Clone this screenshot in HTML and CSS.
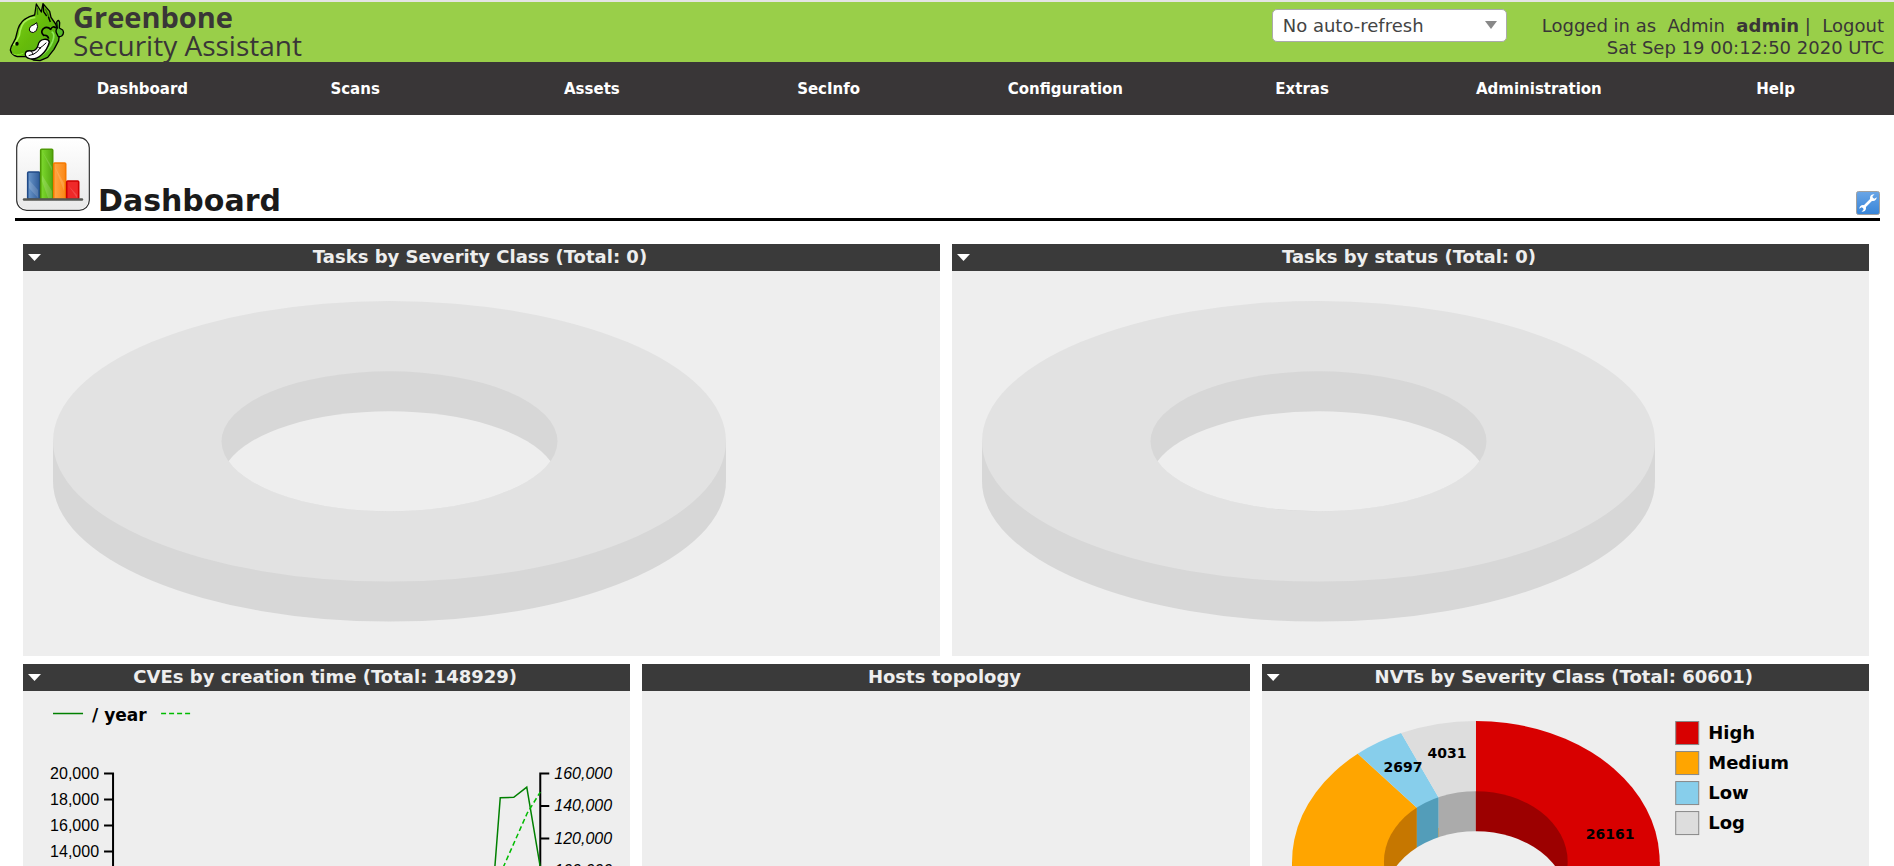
FILE: index.html
```html
<!DOCTYPE html>
<html lang="en">
<head>
  <meta charset="UTF-8">
  <meta name="viewport" content="width=device-width, initial-scale=1.0">
  <title>Greenbone Security Assistant</title>
  <link rel="stylesheet" href="styles.css">
</head>
<body>
  <header class="header">
    <a class="logo" href="#" aria-label="Greenbone Security Assistant">
      <svg class="logo-icon" viewBox="15 9 168 177" aria-hidden="true">
        <defs>
          <linearGradient id="skin" x1="0" y1="0" x2="1" y2="1"><stop offset="0" stop-color="#7fd61f"/><stop offset="0.5" stop-color="#66bb0a"/><stop offset="1" stop-color="#4fae1e"/></linearGradient>
        </defs>
        <path d="M92 45 L97 12 L112 36 L117 11 L137 34 L141 52 L155 72 L160 86 L167 92 L164 122 L150 148 L131 172 L108 182 L88 180 L70 170 L40 170 Q22 164 19 150 Q20 140 27 130 Q36 118 39 98 Q44 72 62 58 Q76 48 92 45 Z" fill="url(#skin)" stroke="#000" stroke-width="4" stroke-linejoin="round"/>
        <path d="M158 66 Q164 56 167 68 L166 84 L176 90 Q182 100 173 108 Q162 114 160 104 Q152 92 160 84 Z" fill="#55bb28" stroke="#000" stroke-width="4" stroke-linejoin="round"/>
        <path d="M94 52 Q66 54 54 76 Q47 92 46 106 Q36 126 29 136" fill="none" stroke="#a6ef55" stroke-width="5"/>
        <path d="M100 24 L101 44 M124 26 L132 44 L137 62" fill="none" stroke="#34730c" stroke-width="4"/>
        <path d="M118 15 L119 35 L128 48 M133 50 L139 66" fill="none" stroke="#000" stroke-width="4"/>
        <path d="M156 84 Q146 76 140 88 Q130 78 118 86 Q108 96 119 106 Q131 104 134 116" fill="none" stroke="#000" stroke-width="5" stroke-linejoin="round"/>
        <path d="M143 95 Q154 100 146 124 Q136 150 108 168" fill="none" stroke="#8ce858" stroke-width="5"/>
        <path d="M76 90 Q76 78 90 74 L98 68 Q104 80 97 92 Q88 101 80 96 Z" fill="#fff" stroke="#000" stroke-width="3"/>
        <path d="M64 160 Q66 150 82 153 Q98 152 102 136 Q105 120 120 118 Q133 116 136 126 Q130 150 113 164 Q96 180 77 176 Q62 172 64 160 Z" fill="#fff" stroke="#000" stroke-width="4"/>
        <path d="M74 167 Q91 164 101 154 Q107 142 116 138 L127 128 M82 154 L88 163 M103 142 L111 145" fill="none" stroke="#000" stroke-width="3"/>
        <ellipse cx="39" cy="131" rx="5" ry="6"/>
        <path d="M24 158 Q33 170 58 160" fill="none" stroke="#8be72f" stroke-width="3"/>
      </svg>
      <span class="logo-text">
        <strong class="logo-name">Greenbone</strong>
        <span class="logo-product">Security Assistant</span>
      </span>
    </a>
    <div class="header-right">
      <div class="refresh">
        <select class="refresh-select" aria-label="Auto-refresh">
          <option>No auto-refresh</option>
        </select>
      </div>
      <div class="user-info">
        <div>Logged in as&nbsp; <a href="#">Admin</a>&nbsp; <b>admin</b> |&nbsp; <a href="#">Logout</a></div>
        <div>Sat Sep 19 00:12:50 2020 UTC</div>
      </div>
    </div>
  </header>

  <nav class="menu">
    <a href="#">Dashboard</a>
    <a href="#">Scans</a>
    <a href="#">Assets</a>
    <a href="#">SecInfo</a>
    <a href="#">Configuration</a>
    <a href="#">Extras</a>
    <a href="#">Administration</a>
    <a href="#">Help</a>
  </nav>

  <main class="content">
    <div class="section-header">
      <svg class="section-icon" viewBox="0 0 74 74" aria-hidden="true">
        <defs>
          <linearGradient id="tile" x1="0" y1="0" x2="0" y2="1"><stop offset="0" stop-color="#fff"/><stop offset="1" stop-color="#e9e9e9"/></linearGradient>
          <linearGradient id="blue"><stop offset="0" stop-color="#6b98cc"/><stop offset="1" stop-color="#2f5b98"/></linearGradient>
          <linearGradient id="green"><stop offset="0" stop-color="#7fdc2f"/><stop offset="1" stop-color="#55a812"/></linearGradient>
          <linearGradient id="orange"><stop offset="0" stop-color="#ffa846"/><stop offset="1" stop-color="#fb8614"/></linearGradient>
        </defs>
        <rect x="1.500" y="1.500" width="71" height="71" rx="9" fill="url(#tile)" stroke="#fff"/>
        <rect x="0.700" y="0.700" width="72.600" height="72.600" rx="10" fill="none" stroke="#2e2e2e" stroke-width="1.200"/>
        <rect x="11.700" y="35" width="12" height="27" rx="1" fill="url(#blue)" stroke="#204a87" stroke-width="1.600"/>
        <rect x="24.700" y="12.300" width="12" height="50" rx="1" fill="url(#green)" stroke="#4e9a06" stroke-width="1.600"/>
        <rect x="37.700" y="26" width="12" height="36" rx="1" fill="url(#orange)" stroke="#f57900" stroke-width="1.600"/>
        <rect x="50.700" y="44" width="12" height="18" rx="1" fill="#ef2929" stroke="#cc0000" stroke-width="1.600"/>
        <path d="M13 43 L22 53 V61 L13 51 Z M26 38 L36 54 V61 H32 L26 44 Z M26 14 L36 30 V34 Z M39 30 L48 46 V54 Z M52 48 L61 58 V61 Z" fill="#fff" opacity="0.15"/>
        <path d="M8 62.500 H66" stroke="#555753" stroke-width="2.400" stroke-linecap="round"/>
      </svg>
      <h1 class="section-title">Dashboard</h1>
      <button class="edit-button" type="button" aria-label="Edit dashboard">
        <svg viewBox="0 0 24 24" aria-hidden="true">
          <defs>
            <linearGradient id="edit" x1="0" y1="0" x2="0" y2="1"><stop offset="0" stop-color="#6ba6e6"/><stop offset="1" stop-color="#3684d8"/></linearGradient>
          </defs>
          <rect x="0.500" y="0.500" width="23" height="23" rx="2" fill="url(#edit)" stroke="#a0a0a0"/>
          <path d="M7 17 L17 7" stroke="#fff" stroke-width="2.600"/>
          <path d="M18.500 3.200 Q14.500 3 14 6.500 Q13.600 9 15.500 9.800 Q19.800 11 20.800 6.300 L18.300 7.800 L16.600 7 L16.500 5.200 Z M5.500 20.800 Q9.500 21 10 17.500 Q10.400 15 8.500 14.200 Q4.200 13 3.200 17.700 L5.700 16.200 L7.400 17 L7.500 18.800 Z" fill="#fff"/>
        </svg>
      </button>
    </div>

    <div class="dashboard">
      <div class="dashboard-row">
        <section class="panel">
          <div class="panel-header">
            <button class="panel-menu" type="button" aria-label="Chart menu"></button>
            <h2 class="panel-title">Tasks by Severity Class (Total: 0)</h2>
          </div>
          <svg class="chart" viewBox="0 0 917 385" preserveAspectRatio="xMinYMin meet">
            <path class="empty-side" d="M30 170.300 v40 a336.500 140.300 0 0 0 673 0 v-40 Z"/>
            <ellipse class="empty-top" cx="366.500" cy="170.300" rx="336.500" ry="140.300"/>
            <ellipse class="empty-side" cx="366.500" cy="170.300" rx="168" ry="70"/>
            <path class="hole" d="M205.500 190.300 A168 70 0 0 0 527.500 190.300 A168 70 0 0 0 205.500 190.300 Z"/>
          </svg>
        </section>
        <section class="panel">
          <div class="panel-header">
            <button class="panel-menu" type="button" aria-label="Chart menu"></button>
            <h2 class="panel-title">Tasks by status (Total: 0)</h2>
          </div>
          <svg class="chart" viewBox="0 0 917 385" preserveAspectRatio="xMinYMin meet">
            <path class="empty-side" d="M30 170.300 v40 a336.500 140.300 0 0 0 673 0 v-40 Z"/>
            <ellipse class="empty-top" cx="366.500" cy="170.300" rx="336.500" ry="140.300"/>
            <ellipse class="empty-side" cx="366.500" cy="170.300" rx="168" ry="70"/>
            <path class="hole" d="M205.500 190.300 A168 70 0 0 0 527.500 190.300 A168 70 0 0 0 205.500 190.300 Z"/>
          </svg>
        </section>
      </div>

      <div class="dashboard-row">
        <section class="panel">
          <div class="panel-header">
            <button class="panel-menu" type="button" aria-label="Chart menu"></button>
            <h2 class="panel-title">CVEs by creation time (Total: 148929)</h2>
          </div>
          <svg class="chart" viewBox="0 0 607 385" preserveAspectRatio="xMinYMin meet">
            <path class="line" d="M30 22.500 H60"/>
            <text class="line-legend" x="69" y="30">/ year</text>
            <path class="line-total" d="M138 22.500 H167"/>
            <g class="axis">
              <path d="M81 82.500 H90 V343.500 H81 M81 108.500 h9 M81 134.500 h9 M81 160.500 h9 M81 186.500 h9 M81 212.500 h9 M81 238.500 h9 M81 265.500 h9 M81 291.500 h9 M81 317.500 h9"/>
              <path d="M526 82.500 H517 V343.500 H526 M517 115 h9 M517 147.500 h9 M517 180.500 h9 M517 212.500 h9 M517 245.500 h9 M517 278.500 h9 M517 310.500 h9"/>
            </g>
            <g class="axis-left">
              <text x="76" y="88">20,000</text>
              <text x="76" y="114">18,000</text>
              <text x="76" y="140">16,000</text>
              <text x="76" y="166">14,000</text>
              <text x="76" y="192">12,000</text>
            </g>
            <g class="axis-right">
              <text x="531" y="88">160,000</text>
              <text x="531" y="120">140,000</text>
              <text x="531" y="153">120,000</text>
              <text x="531" y="185">100,000</text>
            </g>
            <path class="line" d="M463.600 279 L477 106.700 L490.500 106.300 L503.500 96 L517 176"/>
            <path class="line-total" d="M463.600 213 L480.500 175 L504 122 L517 101"/>
          </svg>
        </section>
        <section class="panel">
          <div class="panel-header">
            <h2 class="panel-title">Hosts topology</h2>
          </div>
          <svg class="chart" viewBox="0 0 607 385"></svg>
        </section>
        <section class="panel">
          <div class="panel-header">
            <button class="panel-menu" type="button" aria-label="Chart menu"></button>
            <h2 class="panel-title">NVTs by Severity Class (Total: 60601)</h2>
          </div>
          <svg class="chart" viewBox="0 0 607 385" preserveAspectRatio="xMinYMin meet">
            <defs>
              <clipPath id="nvt-hole"><ellipse cx="213.700" cy="170.300" rx="91.800" ry="70.100"/></clipPath>
            </defs>
            <!-- outer walls -->
            <path class="medium-side" d="M30 170.300 v40 A183.700 140.300 0 0 0 290.100 337.900 v-40 Z"/>
            <path class="high-side" d="M397.400 170.300 v40 A183.700 140.300 0 0 1 290.100 337.900 v-40 Z"/>
            <!-- top faces -->
            <path class="high" d="M213.700 170.300 V30 A183.700 140.300 0 0 1 290.100 297.900 Z"/>
            <path class="medium" d="M213.700 170.300 L290.100 297.900 A183.700 140.300 0 0 1 95.700 62.800 Z"/>
            <path class="low" d="M213.700 170.300 L95.700 62.800 A183.700 140.300 0 0 1 139.100 42.100 Z"/>
            <path class="log" d="M213.700 170.300 L139.100 42.100 A183.700 140.300 0 0 1 213.700 30 Z"/>
            <!-- inner walls -->
            <g clip-path="url(#nvt-hole)">
              <rect class="medium-side" x="120" y="100" width="34.700" height="142"/>
              <rect class="low-side" x="154.700" y="100" width="21.700" height="142"/>
              <rect class="log-side" x="176.400" y="100" width="37.300" height="142"/>
              <rect class="high-side" x="213.700" y="100" width="94" height="142"/>
              <ellipse class="hole" cx="213.700" cy="210.300" rx="91.800" ry="70.100"/>
            </g>
            <g class="slice-label">
              <text x="348" y="148">26161</text>
              <text x="141" y="81">2697</text>
              <text x="185" y="67">4031</text>
            </g>
            <g class="legend">
              <rect class="high" x="413.500" y="30.500" width="23" height="23"/>
              <text x="446" y="48">High</text>
              <rect class="medium" x="413.500" y="60.500" width="23" height="23"/>
              <text x="446" y="78">Medium</text>
              <rect class="low" x="413.500" y="90.500" width="23" height="23"/>
              <text x="446" y="108">Low</text>
              <rect class="log" x="413.500" y="120.500" width="23" height="23"/>
              <text x="446" y="138">Log</text>
            </g>
          </svg>
        </section>
      </div>
    </div>
  </main>
</body>
</html>
```
FILE: styles.css
```css
html {
  height: 100%;
  overflow: hidden;
}
body {
  height: 100%;
  margin: 0;
  overflow: hidden;
  font-family: Verdana, 'DejaVu Sans', sans-serif;
  font-size: 18px;
  color: #393637;
  background: #fff;
}
a {
  color: inherit;
  text-decoration: none;
}

/* header */
.header {
  display: flex;
  justify-content: space-between;
  height: 60px;
  border-top: 2px solid #e4e4e4;
  background: #99cf49;
}
.logo {
  display: flex;
  gap: 8px;
  padding-left: 9px;
}
.logo-icon {
  width: 56px;
  height: 59px;
  margin-top: 1px;
}
.logo-text {
  display: flex;
  flex-direction: column;
  padding-top: 1px;
  font-family: 'Open Sans', sans-serif;
  line-height: 28px;
}
.logo-name {
  font-size: 29px;
}
.logo-product {
  font-size: 28px;
}
.header-right {
  display: flex;
  gap: 35px;
  padding-right: 10px;
}
.refresh {
  position: relative;
  padding-top: 7px;
}
.refresh::after {
  content: "";
  position: absolute;
  top: 19px;
  right: 10px;
  border: 6px solid transparent;
  border-top: 8px solid #888;
  border-bottom: 0;
  pointer-events: none;
}
.refresh-select {
  appearance: none;
  width: 235px;
  height: 33px;
  padding: 0 10px;
  border: 1px solid #aaa;
  border-radius: 5px;
  background: #fff;
  color: #444;
  font: inherit;
}
.user-info {
  padding-top: 13px;
  line-height: 22px;
  text-align: right;
  white-space: nowrap;
}

/* menu */
.menu {
  display: grid;
  grid-template-columns: repeat(8, 1fr);
  padding-top: 1px;
  background: #393637;
  color: #fff;
  font-size: 15px;
  font-weight: bold;
  line-height: 52px;
  text-align: center;
}
.menu a:first-child {
  padding-left: 48px;
}

/* page heading */
.content {
  padding: 22px 14px 0 15px;
}
.section-header {
  display: flex;
  align-items: flex-end;
  gap: 8px;
  padding-bottom: 7px;
  border-bottom: 3px solid #000;
}
.section-icon {
  width: 74px;
  height: 74px;
  margin-left: 1px;
}
.section-title {
  flex: 1;
  margin: 0;
  color: #1a1a1a;
  font-size: 30px;
  line-height: 20px;
}
.edit-button {
  width: 24px;
  height: 24px;
  margin-bottom: -4px;
  padding: 0;
  border: 0;
  background: none;
}
.edit-button svg {
  display: block;
}

/* dashboard */
.dashboard {
  display: flex;
  flex-direction: column;
  gap: 8px;
  padding: 23px 11px 0 8px;
}
.dashboard-row {
  display: flex;
  gap: 12px;
}
.panel {
  flex: 1;
  min-width: 0;
  background: #eee;
}
.panel-header {
  display: flex;
  align-items: center;
  height: 27px;
  padding: 0 8px 0 5px;
  background: #3a3a3a;
  color: #eee;
}
.panel-menu {
  width: 13px;
  height: 7px;
  margin-right: -13px;
  padding: 0;
  border: 0;
  background: #fff;
  clip-path: polygon(0 0, 100% 0, 50% 100%);
}
.panel-title {
  flex: 1;
  margin: 0;
  font-size: 18px;
  line-height: 25px;
  padding-bottom: 2px;
  text-align: center;
}
.chart {
  display: block;
  width: 100%;
}

/* charts */
.empty-top { fill: #e2e2e2; }
.empty-side { fill: #d7d7d7; }
.hole { fill: #eee; }
.high { fill: #d80000; }
.high-side { fill: #9c0000; }
.medium { fill: #ffa500; }
.medium-side { fill: #c67700; }
.low { fill: #87ceeb; }
.low-side { fill: #539db9; }
.log { fill: #ddd; }
.log-side { fill: #ababab; }
.slice-label,
.legend,
.line-legend {
  font-weight: bold;
}
.slice-label {
  font-size: 14px;
  text-anchor: middle;
}
.legend {
  font-size: 18px;
}
.legend rect {
  stroke: #888;
}
.line-legend {
  font-size: 17px;
}
.line {
  fill: none;
  stroke: green;
  stroke-width: 1.5;
}
.line-total {
  fill: none;
  stroke: #0b0;
  stroke-width: 1.5;
  stroke-dasharray: 5 3;
}
.axis {
  fill: none;
  stroke: #000;
  stroke-width: 2;
}
.axis-left,
.axis-right {
  font-family: Arial, 'Liberation Sans', sans-serif;
  font-size: 16px;
}
.axis-left {
  text-anchor: end;
}
.axis-right {
  font-style: italic;
}
```
